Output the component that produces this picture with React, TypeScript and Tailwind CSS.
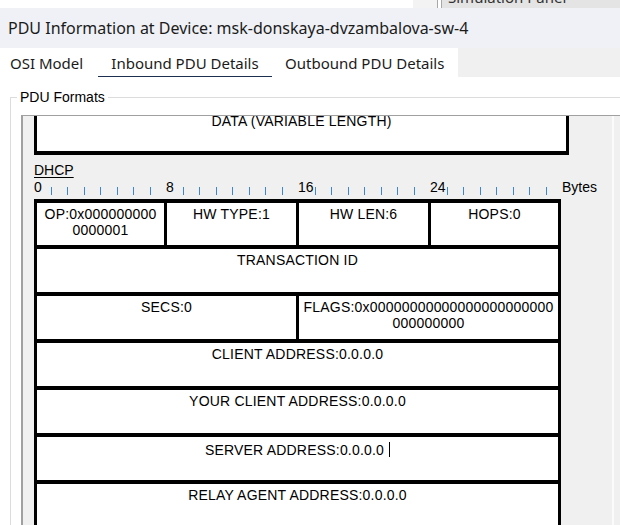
import React from "react";

const ui = { fontFamily: '"Noto Sans", "Open Sans", sans-serif' };
const arial = { fontFamily: '"Liberation Sans", Arial, sans-serif' };

function Ruler() {
  const ticks: number[] = [];
  for (let k = 1; k < 32; k++) {
    if (k % 8 !== 0) ticks.push(Math.round(16.5 * k) + 0.5);
  }
  return (
    <div className="relative mt-px flex h-4 text-[14px] leading-4 text-black">
      <span className="w-[132px]">0</span>
      <span className="w-[132px]">8</span>
      <span className="w-[132px]">16</span>
      <span className="w-[132px]">24</span>
      <span>Bytes</span>
      <svg
        className="pointer-events-none absolute left-0 top-0"
        width="528"
        height="17"
      >
        {ticks.map((x) => (
          <line key={x} x1={x} x2={x} y1="8" y2="16" stroke="#3b86d8" strokeWidth="1" />
        ))}
      </svg>
    </div>
  );
}

function Cell({
  children,
  span,
  first,
}: {
  children: React.ReactNode;
  span?: string;
  first?: boolean;
}) {
  return (
    <div
      className={`${span ?? ""} ${first ? "h-[42px]" : "h-[43px]"} whitespace-nowrap bg-white pt-[3px] text-center text-[14px] leading-4 tracking-[0.2px] text-black`}
    >
      {children}
    </div>
  );
}

export default function App() {
  return (
    <div className="relative h-[525px] w-[620px] overflow-hidden bg-white" style={ui}>
      {/* strip of the window behind */}
      <div className="flex h-2">
        <div className="w-[413px] bg-white" />
        <div className="w-6 bg-[#f3f3f3]" />
        <div className="w-px bg-[#a8a8a8]" />
        <div className="w-[3px] bg-white" />
        <div className="w-px bg-[#a8a8a8]" />
        <div className="flex-1 overflow-hidden bg-[#e4e4e4]">
          <div className="-mt-[13px] ml-[6px] text-[15px] leading-5 text-[#333]">Simulation Panel</div>
        </div>
      </div>

      {/* title bar */}
      <div className="flex h-10 items-center bg-[#eff1f6] pl-2 text-[16px] text-[#1b1b1b]">
        PDU Information at Device: msk-donskaya-dvzambalova-sw-4
      </div>

      {/* tabs */}
      <div className="flex h-[29px]">
        <div className="flex w-[458px] bg-white text-[15px] leading-5 text-[#1b1b1b]">
          <div className="w-[98px] pl-[10px] pt-[5px]">OSI Model</div>
          <div className="flex w-[174px] flex-col items-center pt-[5px]">
            <span>Inbound PDU Details</span>
            <span className="mt-[3px] h-[3px] w-full bg-[#1c2f50]" />
          </div>
          <div className="pl-[13px] pt-[5px]">Outbound PDU Details</div>
        </div>
        <div className="flex-1 bg-[#f0f0f0]" />
      </div>

      {/* group box */}
      <fieldset className="ml-[10px] mt-3 w-[640px] border border-[#dcdcdc]" style={arial}>
        <legend className="ml-[6px] px-[3px] text-[14px] leading-4 text-black">PDU Formats</legend>

        <div className="ml-[10px] mt-[10px] flex h-[420px] overflow-hidden border-l-2 border-t border-[#a0a0a0] bg-[#f0f0f0]">
          <div className="w-[589px] pl-[11px]">
            {/* previous pdu, scrolled off the top */}
            <div className="-mt-[3px] h-[42px] w-[535px] border-x-[3px] border-b-4 border-black bg-white text-center text-[14px] leading-4 tracking-[0.2px] text-black">
              DATA (VARIABLE LENGTH)
            </div>

            <div className="mt-[7px] text-[14px] leading-4 text-black underline underline-offset-2">DHCP</div>

            <Ruler />

            <div className="mt-1 grid w-max grid-cols-[127px_129px_129px_127px] gap-x-[3px] gap-y-1 bg-black px-[3px] pt-1">
              <Cell first>
                OP:0x000000000
                <br />
                0000001
              </Cell>
              <Cell first>HW TYPE:1</Cell>
              <Cell first>HW LEN:6</Cell>
              <Cell first>HOPS:0</Cell>

              <Cell span="col-span-4">TRANSACTION ID</Cell>

              <Cell span="col-span-2">SECS:0</Cell>
              <Cell span="col-span-2">
                FLAGS:0x00000000000000000000000
                <br />
                000000000
              </Cell>

              <Cell span="col-span-4">CLIENT ADDRESS:0.0.0.0</Cell>
              <Cell span="col-span-4">YOUR CLIENT ADDRESS:0.0.0.0</Cell>
              <Cell span="col-span-4">
                SERVER ADDRESS:0.0.0.0
                <span className="ml-[5px] inline-block h-[15px] w-px translate-y-[2px] bg-black" />
              </Cell>
              <Cell span="col-span-4">RELAY AGENT ADDRESS:0.0.0.0</Cell>
            </div>
          </div>
          <div className="w-[2px] bg-[#fbfbfb]" />
          <div className="flex-1" />
        </div>
      </fieldset>
    </div>
  );
}
